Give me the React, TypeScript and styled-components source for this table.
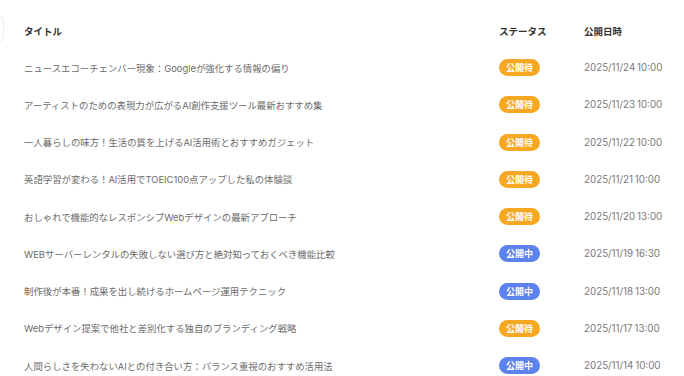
import React from "react";
import styled, { createGlobalStyle } from "styled-components";

const Global = createGlobalStyle`
  html, body { margin: 0; padding: 0; background: #ffffff; }
  body { font-family: Inter, "Noto Sans CJK JP", sans-serif; -webkit-font-smoothing: antialiased; }
`;

const Table = styled.div`
  display: grid;
  grid-template-columns: 24px 475px 85px 1fr;
  padding-top: 13px;
  width: 684px;
`;

const HeaderCell = styled.div`
  height: 36px;
  display: flex;
  align-items: center;
  font-size: 9.5px;
  font-weight: 700;
  color: #333;
  font-family: "Noto Sans CJK JP", sans-serif;
`;

const Stub = styled.div`
  height: 36px;
  display: flex;
  align-items: center;
`;

const StubBox = styled.div`
  width: 3px;
  height: 23px;
  margin-top: -5px;
  border: 1px solid #eeeeee;
  border-left: none;
  border-radius: 0 4px 4px 0;
`;

const Cell = styled.div`
  height: 37.25px;
  display: flex;
  align-items: center;
  font-size: 9.4px;
  color: #6b6b6b;
  white-space: nowrap;
`;

const TitleCell = styled(Cell)`
  font-family: Inter, "Noto Sans CJK JP", sans-serif;
`;

const DateCell = styled(Cell)`
  font-family: Inter, sans-serif;
  color: #7a7a7a;
  font-size: 9.8px;
  word-spacing: -1px;
`;

const Badge = styled.span<{ $kind: "wait" | "live" }>`
  display: inline-flex;
  align-items: center;
  justify-content: center;
  width: 41px;
  height: 17px;
  border-radius: 9px;
  background: ${(p) => (p.$kind === "wait" ? "#f7a823" : "#5c82ee")};
  color: #fff;
  font-size: 9px;
  font-weight: 700;
  font-family: "Noto Sans CJK JP", sans-serif;
`;

type Row = { title: string; status: "wait" | "live"; date: string };

const rows: Row[] = [
  { title: "ニュースエコーチェンバー現象：Googleが強化する情報の偏り", status: "wait", date: "2025/11/24 10:00" },
  { title: "アーティストのための表現力が広がるAI創作支援ツール最新おすすめ集", status: "wait", date: "2025/11/23 10:00" },
  { title: "一人暮らしの味方！生活の質を上げるAI活用術とおすすめガジェット", status: "wait", date: "2025/11/22 10:00" },
  { title: "英語学習が変わる！AI活用でTOEIC100点アップした私の体験談", status: "wait", date: "2025/11/21 10:00" },
  { title: "おしゃれで機能的なレスポンシブWebデザインの最新アプローチ", status: "wait", date: "2025/11/20 13:00" },
  { title: "WEBサーバーレンタルの失敗しない選び方と絶対知っておくべき機能比較", status: "live", date: "2025/11/19 16:30" },
  { title: "制作後が本番！成果を出し続けるホームページ運用テクニック", status: "live", date: "2025/11/18 13:00" },
  { title: "Webデザイン提案で他社と差別化する独自のブランディング戦略", status: "wait", date: "2025/11/17 13:00" },
  { title: "人間らしさを失わないAIとの付き合い方：バランス重視のおすすめ活用法", status: "live", date: "2025/11/14 10:00" },
];

export default function App() {
  return (
    <>
      <Global />
      <Table>
        <Stub>
          <StubBox />
        </Stub>
        <HeaderCell>タイトル</HeaderCell>
        <HeaderCell>ステータス</HeaderCell>
        <HeaderCell>公開日時</HeaderCell>
        {rows.map((r, i) => (
          <React.Fragment key={i}>
            <Cell />
            <TitleCell>{r.title}</TitleCell>
            <Cell>
              <Badge $kind={r.status}>{r.status === "wait" ? "公開待" : "公開中"}</Badge>
            </Cell>
            <DateCell>{r.date}</DateCell>
          </React.Fragment>
        ))}
      </Table>
    </>
  );
}
